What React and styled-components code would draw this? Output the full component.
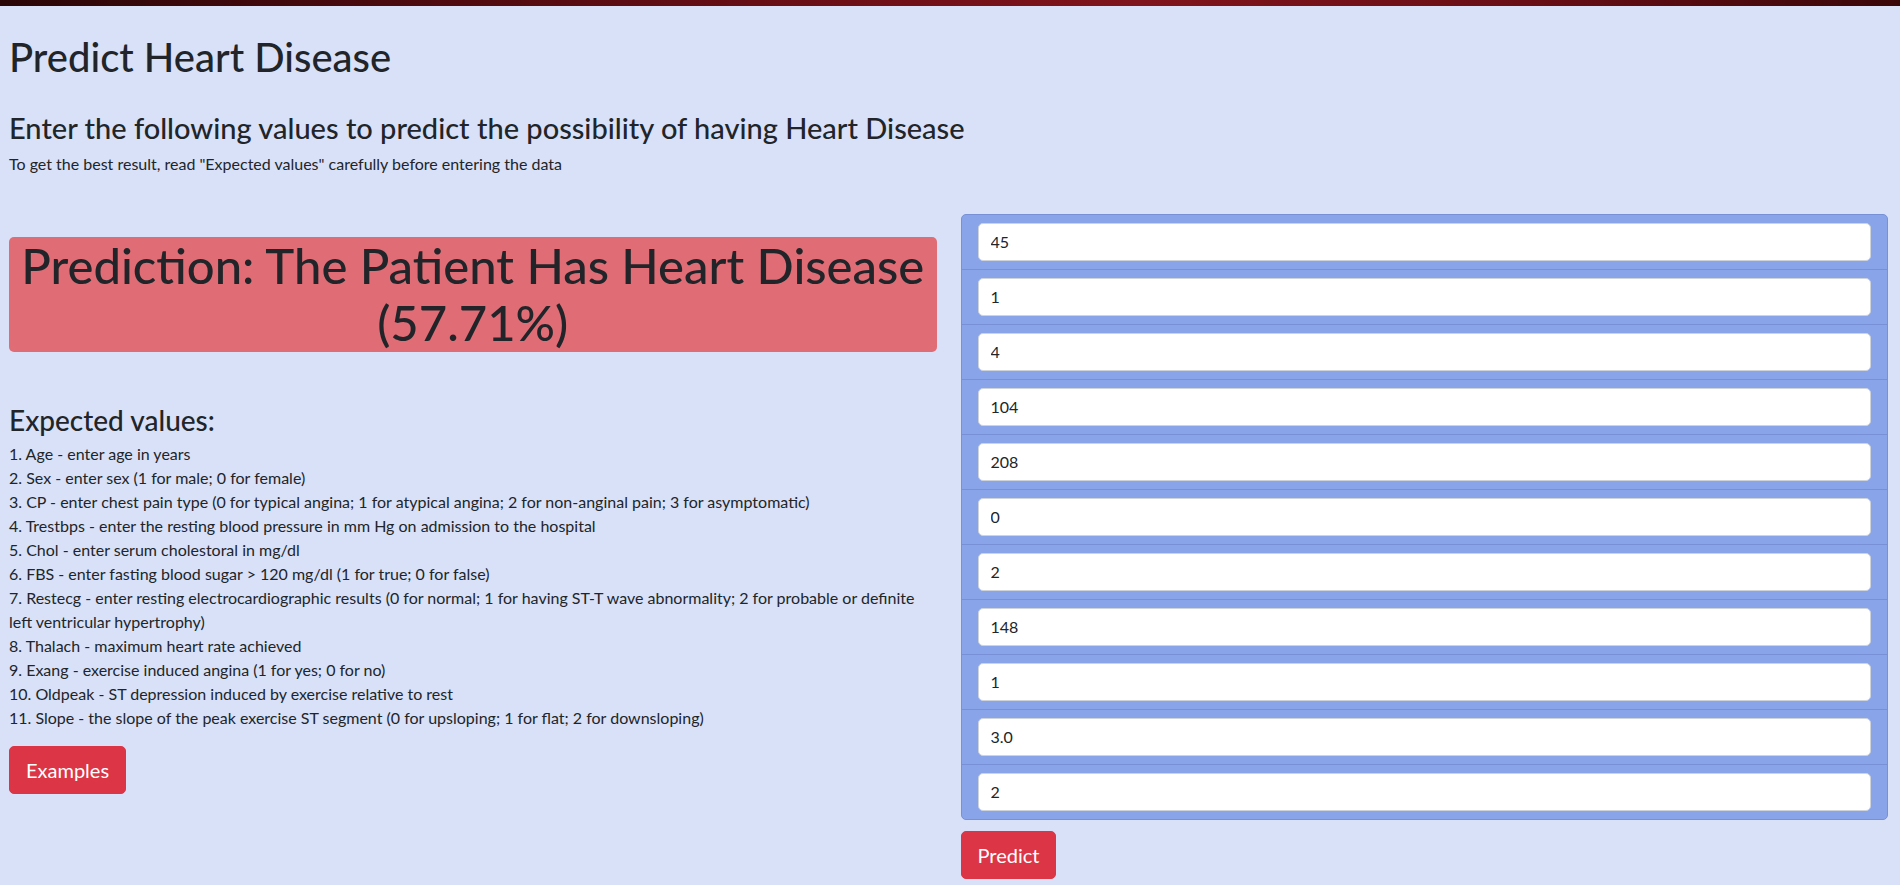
import React from "react";
import styled, { createGlobalStyle } from "styled-components";

const GlobalStyle = createGlobalStyle`
  html, body {
    margin: 0;
    padding: 0;
  }
  body {
    background: #d8e1f8;
    color: #212529;
    font-family: Lato, "Open Sans", sans-serif;
    font-size: 16px;
    line-height: 1.5;
  }
  * {
    box-sizing: border-box;
  }
`;

const expected = [
  "1. Age - enter age in years",
  "2. Sex - enter sex (1 for male; 0 for female)",
  "3. CP - enter chest pain type (0 for typical angina; 1 for atypical angina; 2 for non-anginal pain; 3 for asymptomatic)",
  "4. Trestbps - enter the resting blood pressure in mm Hg on admission to the hospital",
  "5. Chol - enter serum cholestoral in mg/dl",
  "6. FBS - enter fasting blood sugar > 120 mg/dl (1 for true; 0 for false)",
  "7. Restecg - enter resting electrocardiographic results (0 for normal; 1 for having ST-T wave abnormality; 2 for probable or definite left ventricular hypertrophy)",
  "8. Thalach - maximum heart rate achieved",
  "9. Exang - exercise induced angina (1 for yes; 0 for no)",
  "10. Oldpeak - ST depression induced by exercise relative to rest",
  "11. Slope - the slope of the peak exercise ST segment (0 for upsloping; 1 for flat; 2 for downsloping)",
];

const fields = [
  { name: "age", value: "45" },
  { name: "sex", value: "1" },
  { name: "cp", value: "4" },
  { name: "trestbps", value: "104" },
  { name: "chol", value: "208" },
  { name: "fbs", value: "0" },
  { name: "restecg", value: "2" },
  { name: "thalach", value: "148" },
  { name: "exang", value: "1" },
  { name: "oldpeak", value: "3.0" },
  { name: "slope", value: "2" },
];

const App = () => {
  return (
    <>
      <GlobalStyle />
      <TopStrip />
      <Page>
        <Title>Predict Heart Disease</Title>
        <SubTitle>
          Enter the following values to predict the possibility of having Heart
          Disease
        </SubTitle>
        <Hint>
          To get the best result, read "Expected values" carefully before
          entering the data
        </Hint>

        <Row>
          <LeftCol>
            <Result>Prediction: The Patient Has Heart Disease (57.71%)</Result>

            <SectionTitle>Expected values:</SectionTitle>
            <ExpectedList>
              {expected.map((line) => (
                <li key={line}>{line}</li>
              ))}
            </ExpectedList>
            <Button type="button">Examples</Button>
          </LeftCol>

          <RightCol>
            <FieldList>
              {fields.map((f) => (
                <FieldItem key={f.name}>
                  <Input name={f.name} defaultValue={f.value} />
                </FieldItem>
              ))}
            </FieldList>
            <Button type="submit" $top>
              Predict
            </Button>
          </RightCol>
        </Row>
      </Page>
    </>
  );
};

export default App;

const TopStrip = styled.div`
  height: 6px;
  background: linear-gradient(
    90deg,
    #2b0607 0%,
    #4a0a0e 20%,
    #6e0f16 45%,
    #80141c 60%,
    #6a0e15 80%,
    #3a0709 100%
  );
`;

const Page = styled.div`
  padding: 0 12px 0 9px;
`;

const Title = styled.h1`
  font-size: 40px;
  font-weight: 500;
  line-height: 1.2;
  margin: 27px 0 30px;
`;

const SubTitle = styled.h3`
  font-size: 29px;
  font-weight: 500;
  line-height: 1.2;
  margin: 0 0 6px;
`;

const Hint = styled.p`
  font-size: 16px;
  margin: 0;
`;

const Row = styled.div`
  display: grid;
  grid-template-columns: 1fr 1fr;
  gap: 24px;
  margin-top: 38px;
`;

const LeftCol = styled.div`
  padding-top: 23px;
`;

const RightCol = styled.div`
  display: flex;
  flex-direction: column;
  align-items: flex-start;
`;

const Result = styled.div`
  background: #e06c75;
  border-radius: 5px;
  font-size: 49px;
  font-weight: 500;
  line-height: 57.5px;
  text-align: center;
`;

const SectionTitle = styled.h3`
  font-size: 28px;
  font-weight: 500;
  line-height: 1.2;
  margin: 52px 0 5px;
`;

const ExpectedList = styled.ul`
  list-style: none;
  max-width: 922px;
  margin: 0 0 16px;
  padding: 0;
  font-size: 16px;
  line-height: 24px;
`;

const Button = styled.button`
  background: #dc3545;
  color: #fff;
  border: 1px solid #dc3545;
  border-radius: 5px;
  font-family: inherit;
  font-size: 20px;
  line-height: 1.5;
  padding: 8px 16px;
  margin-top: ${(p) => (p.$top ? "11px" : "0")};
  cursor: pointer;
`;

const FieldList = styled.ul`
  list-style: none;
  margin: 0;
  padding: 0;
  width: 100%;
  background: #8aa4ea;
  border: 1px solid #7890d6;
  border-radius: 5px;
`;

const FieldItem = styled.li`
  padding: 8px 16px;
  & + & {
    border-top: 1px solid #7890d6;
  }
`;

const Input = styled.input`
  display: block;
  width: 100%;
  height: 38px;
  padding: 6px 12px;
  font-family: inherit;
  font-size: 16px;
  color: #212529;
  background: #fff;
  border: 1px solid #ced4da;
  border-radius: 5px;
  outline: none;
`;
